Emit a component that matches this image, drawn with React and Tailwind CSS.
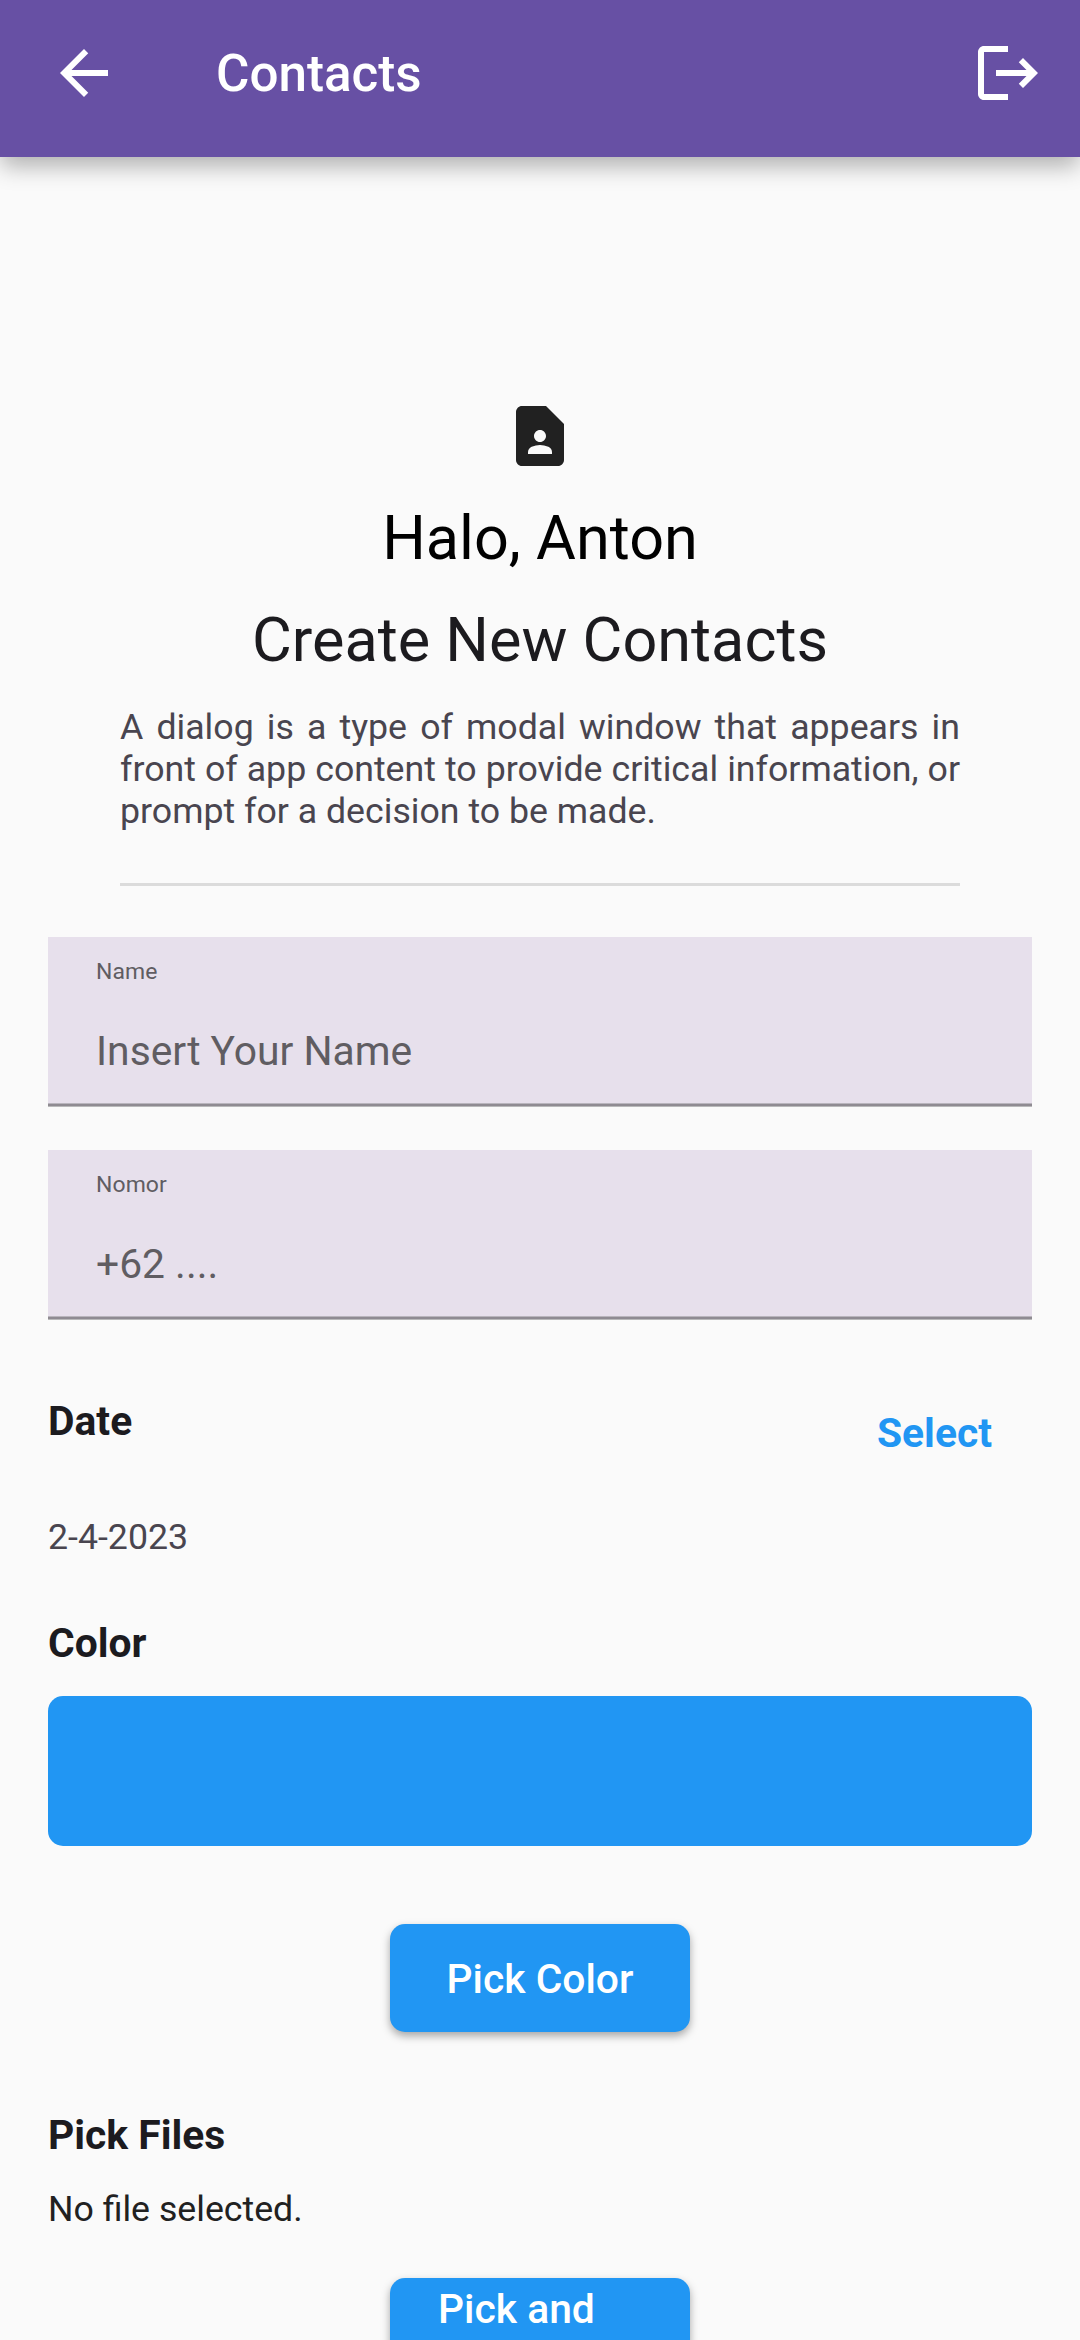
import React from "react";
import { MdArrowBack, MdLogout, MdContactPage } from "react-icons/md";

function AppBar() {
  return (
    <header className="relative z-10 flex h-[157px] w-full items-start bg-[#6750a4] pl-12 pr-9 pt-[37px] text-white shadow-[0_10px_22px_-1px_rgba(0,0,0,0.3)]">
      <button aria-label="Back" className="size-[72px]">
        <MdArrowBack className="size-[72px]" />
      </button>
      <h1 className="ml-24 mt-px h-[72px] text-[51.2px] font-medium leading-[72px]">Contacts</h1>
      <button aria-label="Log out" className="ml-auto size-[72px]">
        <MdLogout className="size-[72px]" />
      </button>
    </header>
  );
}

function Field({ label, placeholder }) {
  return (
    <label className="flex h-[170px] flex-col bg-[#e7e0ec]">
      <span className="px-12 pt-[21px] text-[22.95px] leading-[28px] tracking-[0.1px] text-[#605d62]">{label}</span>
      <input
        placeholder={placeholder}
        className="mt-[41px] h-12 w-full bg-transparent px-12 py-0 text-[40.8px] leading-[48px] outline-none placeholder:text-[#605d62] placeholder:opacity-100"
      />
      <span className="mt-auto h-1 border-y border-t-[#b9b5bd] border-b-[#b9b9ba] bg-[#8f8b92]" />
    </label>
  );
}

function SectionTitle({ children }) {
  return <h3 className="text-[40.8px] font-bold leading-[48px]">{children}</h3>;
}

const buttonClass =
  "mx-auto block h-[108px] w-[300px] rounded-[15px] bg-[#2196f3] text-[40.8px] font-medium leading-[48px] text-white shadow-[0_4px_9px_rgba(0,0,0,0.34)]";

export default function App() {
  return (
    <div className="h-[2340px] w-[1080px] overflow-hidden bg-[#fafafa] font-['Roboto',sans-serif] text-[#1c1b1f]">
      <AppBar />
      <main className="flex flex-col px-12 pt-[243px]">
        <section className="flex flex-col items-center px-[72px]">
          <MdContactPage className="size-[72px] text-[#212121]" />
          <p className="mt-[30px] text-[61.2px] leading-[72px] text-black">Halo, Anton</p>
          <h2 className="mt-[30px] text-[61.2px] leading-[72px]">Create New Contacts</h2>
          <p className="mt-[30px] w-full text-justify text-[35.7px] leading-[42px] text-[#49454f]">
            A dialog is a type of modal window that appears in front of app content to provide critical information, or
            prompt for a decision to be made.
          </p>
          <hr className="mt-[51px] h-[3px] w-full border-0 bg-[#dbdbdb]" />
        </section>

        <div className="mt-[51px] flex flex-col gap-[43px]">
          <Field label="Name" placeholder="Insert Your Name" />
          <Field label="Nomor" placeholder="+62 ...." />
        </div>

        <div className="mt-[77px] flex h-[119px] items-start justify-between pr-10">
          <SectionTitle>Date</SectionTitle>
          <button className="mt-3 text-[40.8px] font-bold leading-[48px] text-[#2196f3]">Select</button>
        </div>
        <p className="text-[35.7px] leading-[42px] text-[#49454f]">2-4-2023</p>

        <div className="mt-[61px]">
          <SectionTitle>Color</SectionTitle>
        </div>
        <div className="mt-[29px] h-[150px] rounded-[15px] bg-[#2196f3]" />
        <div className="mt-[78px]">
          <button className={buttonClass}>
            <span className="block pt-0.5">Pick Color</span>
          </button>
        </div>

        <div className="mt-[79px]">
          <SectionTitle>Pick Files</SectionTitle>
        </div>
        <p className="mt-[29px] text-[35.7px] leading-[42px] text-[#212121]">No file selected.</p>
        <div className="mt-12">
          <button className={buttonClass}>
            <span className="flex h-full items-start px-12 pt-[7px]">Pick and</span>
          </button>
        </div>
      </main>
    </div>
  );
}
